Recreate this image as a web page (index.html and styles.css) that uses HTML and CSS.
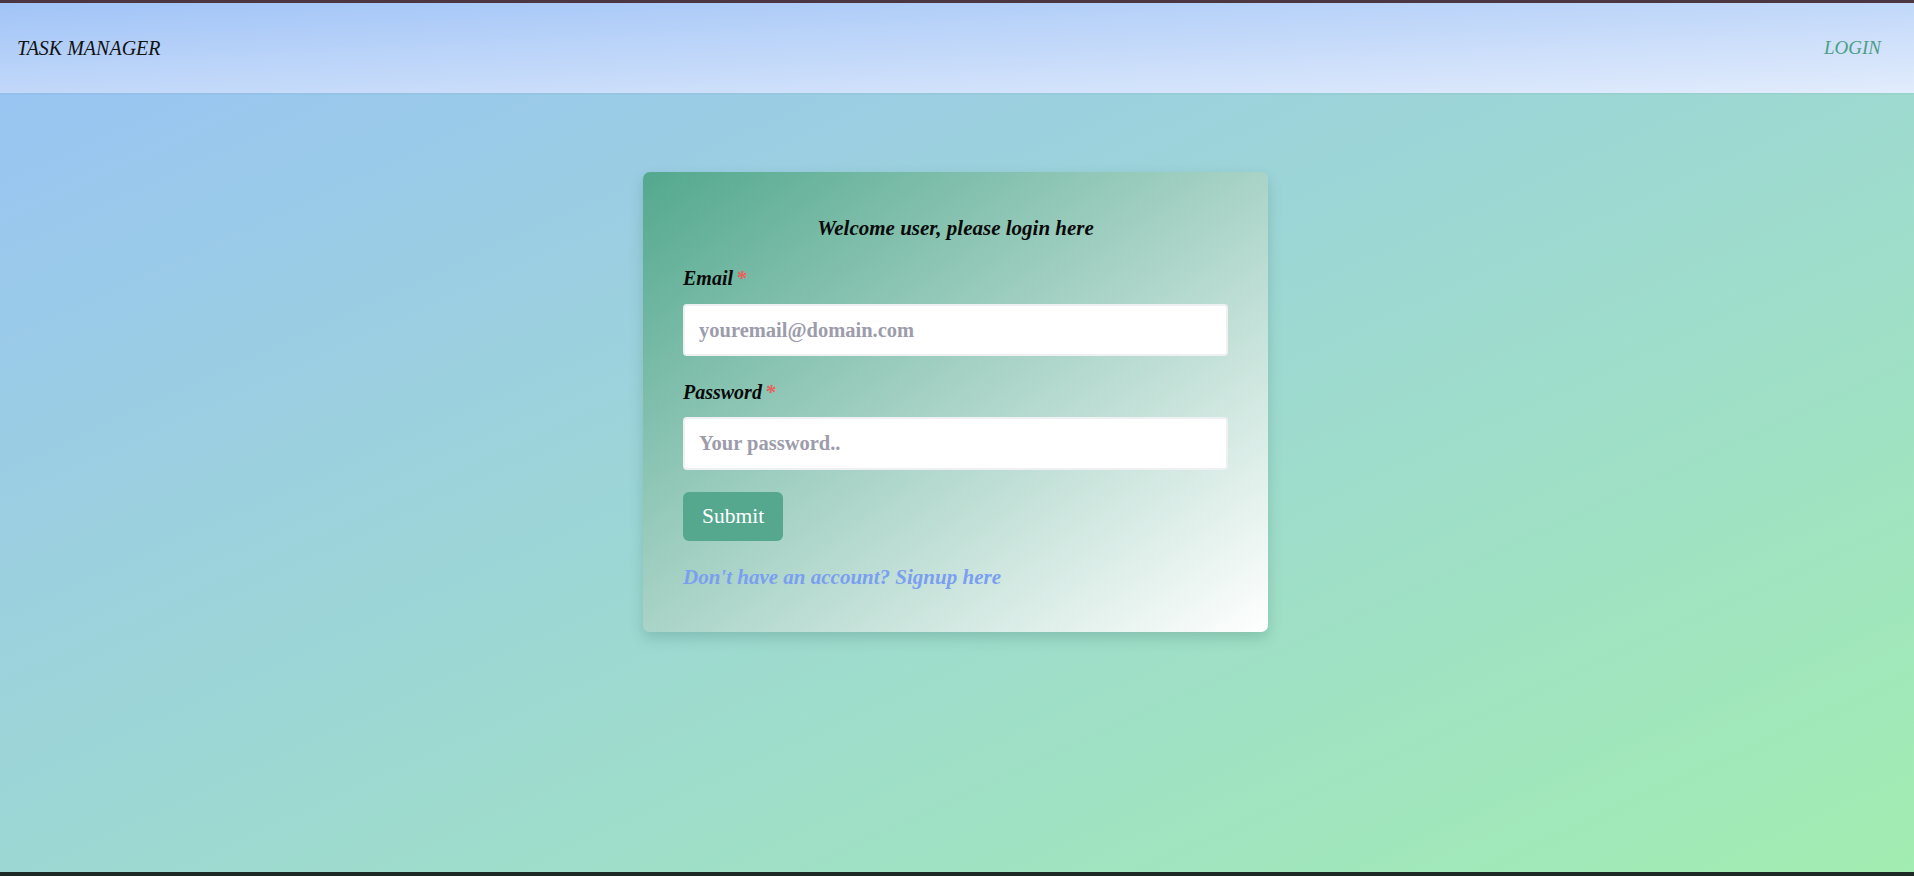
FILE: index.html
```html
<!DOCTYPE html>
<html lang="en">
<head>
<meta charset="utf-8">
<title>Task Manager</title>
<link rel="stylesheet" href="styles.css">
</head>
<body>
<div class="page">
  <div class="topstrip"></div>
  <header class="navbar">
    <span class="brand">TASK MANAGER</span>
    <a class="nav-login" href="#">LOGIN</a>
  </header>
  <main class="main">
    <form class="card">
      <h2 class="welcome">Welcome user, please login here</h2>
      <label class="label">Email<span class="req">*</span></label>
      <input class="input" type="text" placeholder="youremail@domain.com">
      <label class="label label-pw">Password<span class="req">*</span></label>
      <input class="input input-pw" type="password" placeholder="Your password..">
      <button class="submit" type="button">Submit</button>
      <a class="signup" href="#">Don't have an account? Signup here</a>
    </form>
  </main>
  <div class="bottomstrip"></div>
</div>
</body>
</html>
```

FILE: styles.css
```css
* { box-sizing: border-box; }
html, body { margin: 0; padding: 0; height: 100%; }
body {
  font-family: "Liberation Serif", "DejaVu Serif", serif;
  background: linear-gradient(to bottom right, #98c2f6, #a2edb1);
}
.page {
  height: 876px;
  display: flex;
  flex-direction: column;
}
.topstrip { height: 3px; background: #4b3642; flex: none; }
.bottomstrip { height: 4px; background: #1e2a26; flex: none; }
.navbar {
  height: 90px;
  flex: none;
  display: flex;
  align-items: center;
  justify-content: space-between;
  padding: 0 33px 0 17px;
  background: linear-gradient(to bottom right, #a1c4f7, #e2ecfc);
  box-shadow: 0 1px 2px rgba(0,0,0,0.05);
}
.brand {
  font-style: italic;
  font-size: 20px;
  color: #111;
}
.nav-login {
  font-style: italic;
  font-size: 19px;
  color: #4c9e86;
  text-decoration: none;
}
.main {
  flex: 1;
  display: flex;
  justify-content: center;
  align-items: flex-start;
  padding: 79px 3px 0 0;
}
.card {
  width: 625px;
  padding: 44px 40px 43px;
  border-radius: 7px;
  background: linear-gradient(to bottom right, #53a88e, #ffffff);
  box-shadow: 0 6px 14px rgba(40, 90, 80, 0.22);
  display: flex;
  flex-direction: column;
  align-items: flex-start;
}
.welcome {
  align-self: stretch;
  text-align: center;
  margin: 0;
  font-size: 21px;
  line-height: 24px;
  font-weight: bold;
  font-style: italic;
  color: #0a0a0a;
}
.label {
  margin-top: 26px;
  font-size: 20px;
  line-height: 24px;
  font-weight: bold;
  font-style: italic;
  color: #0a0a0a;
}
.label-pw { margin-top: 24px; }
.req {
  color: #e8605a;
  margin-left: 3px;
  font-size: 21px;
}
.input {
  margin-top: 14px;
  width: 100%;
  height: 52px;
  padding: 0 14px;
  border: 2px solid #eef0f2;
  border-radius: 4px;
  background: #fff;
  font-family: "Liberation Serif", "DejaVu Serif", serif;
  font-size: 20.5px;
  font-weight: bold;
  color: #333;
  outline: none;
}
.input-pw { margin-top: 13px; height: 53px; }
.input::placeholder { color: #9c9cab; font-weight: bold; }
.submit {
  margin-top: 22px;
  height: 49px;
  padding: 0 19px;
  border: none;
  border-radius: 6px;
  background: #55a88e;
  color: #fff;
  font-family: "Liberation Serif", "DejaVu Serif", serif;
  font-size: 21.5px;
}
.signup {
  margin-top: 24px;
  font-size: 21px;
  line-height: 24px;
  font-weight: bold;
  font-style: italic;
  color: #7b9ff0;
  text-decoration: none;
}
```
